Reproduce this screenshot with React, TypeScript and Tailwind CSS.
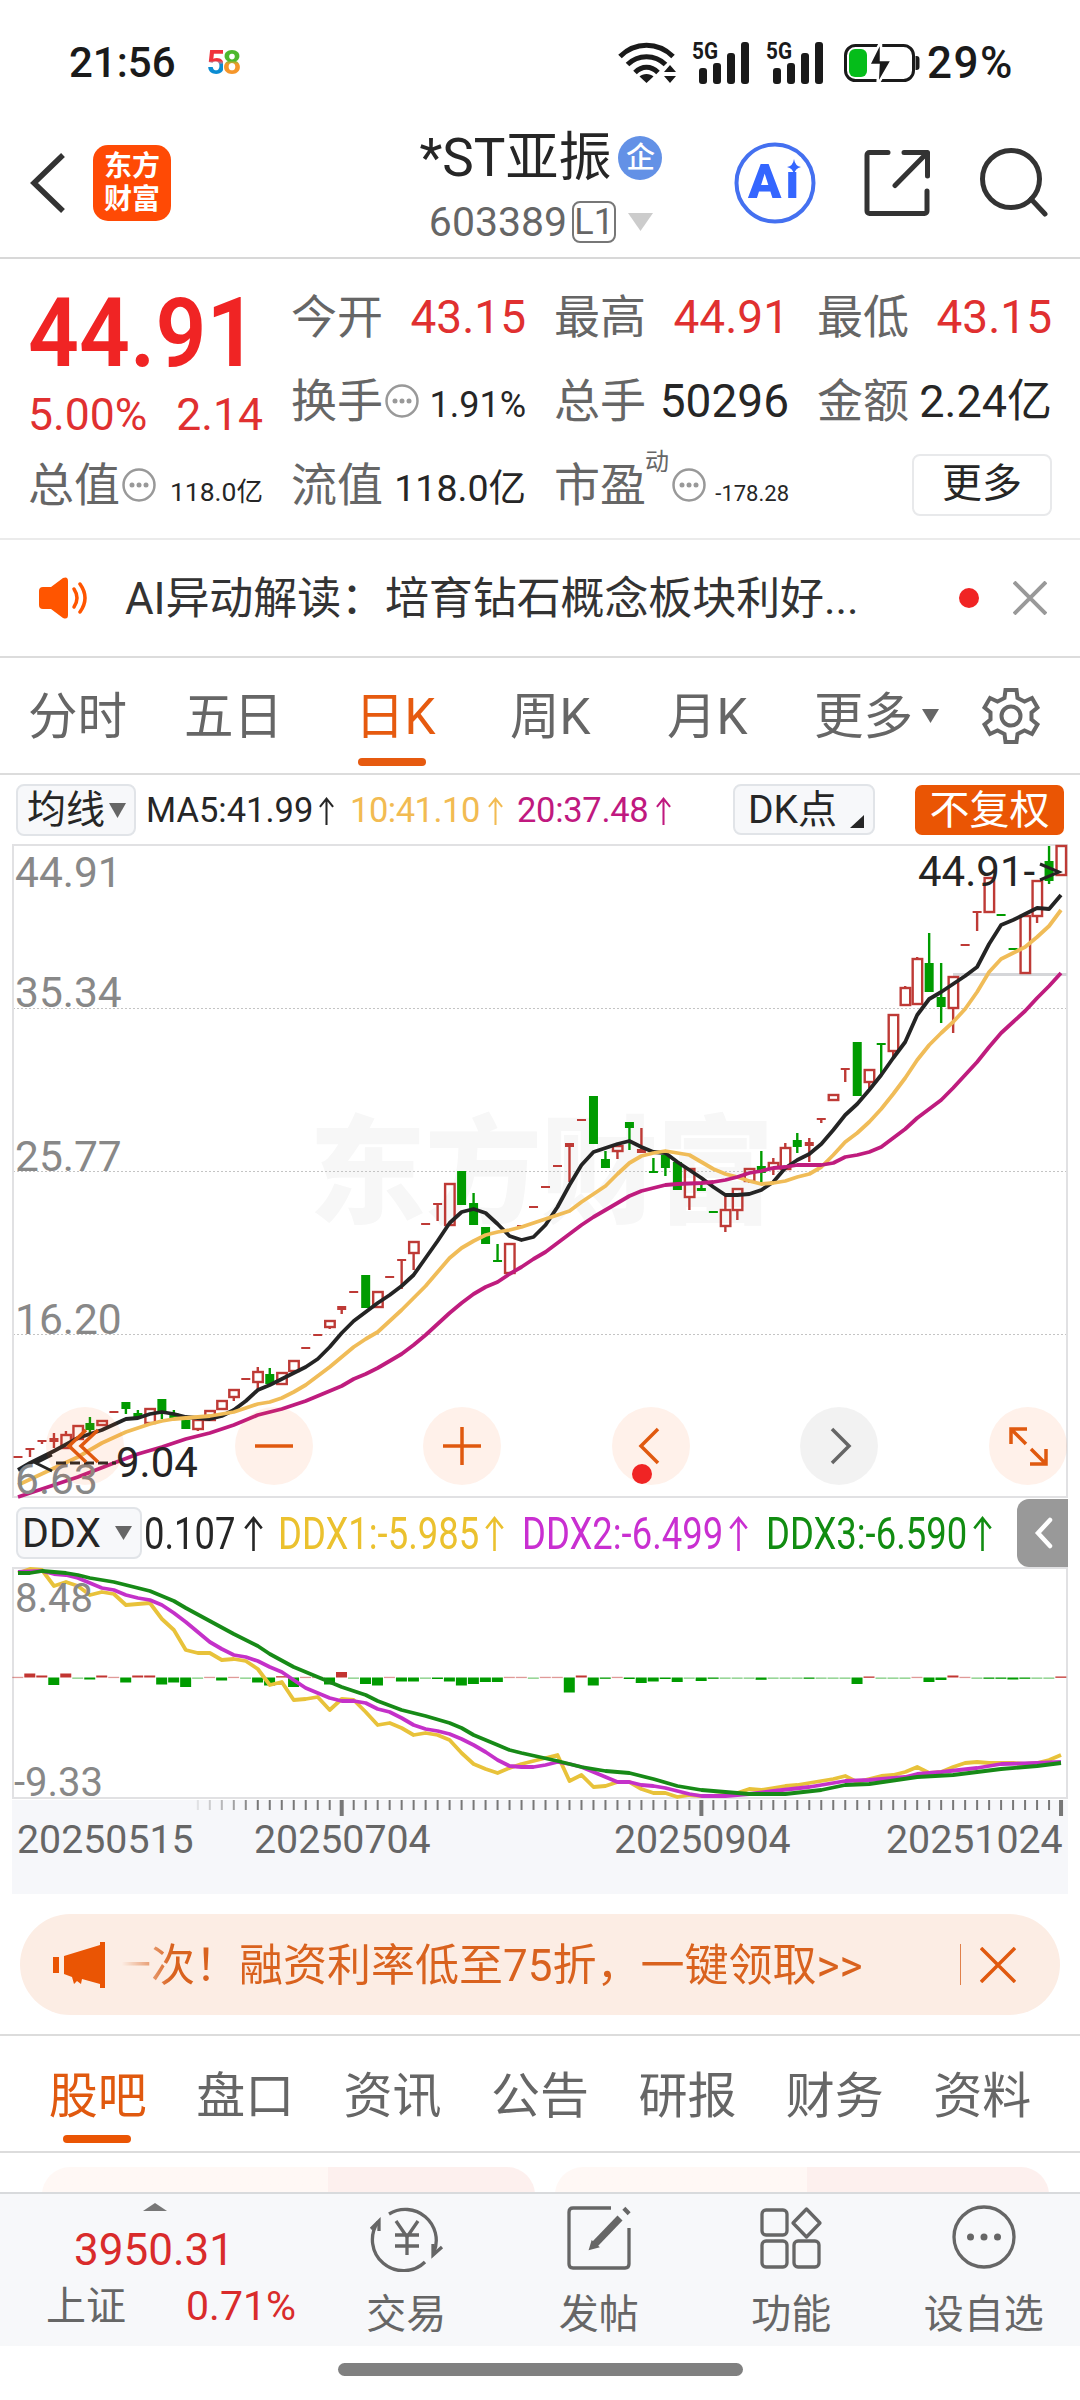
import type { ReactNode } from "react";

type TPoint = [number, number];

// [종류, 몸통 위, 몸통 아래, 고가, 저가]
// h: 빈 양봉, r: 채운 양봉, g: 음봉
type TCandle = ["h" | "r" | "g", number, number, number?, number?];

const SLOT = 11.989;
const cx = (index: number) => 18 + SLOT * index;

const candles: TCandle[] = [
  ["r", 1456, 1458],
  ["r", 1448, 1450, 1448, 1457],
  ["r", 1440, 1442, 1440, 1444],
  ["r", 1438, 1442, 1433, 1448],
  ["h", 1435, 1448, 1431],
  ["h", 1426, 1439],
  ["g", 1423, 1430, 1417, 1433],
  ["h", 1421, 1425],
  ["r", 1411, 1413],
  ["g", 1402, 1409, 1402, 1414],
  ["g", 1413, 1417, 1410],
  ["h", 1409, 1423],
  ["g", 1399, 1412, 1399, 1419],
  ["g", 1413, 1418, 1410],
  ["g", 1420, 1429],
  ["h", 1420, 1429, 1420, 1431],
  ["h", 1411, 1420],
  ["h", 1401, 1409],
  ["h", 1390, 1397, 1390, 1401],
  ["r", 1378, 1380],
  ["h", 1372, 1382, 1367, 1390],
  ["g", 1374, 1384, 1368],
  ["h", 1373, 1384],
  ["h", 1361, 1371],
  ["r", 1347, 1349],
  ["r", 1334, 1336],
  ["h", 1321, 1327, 1321, 1329],
  ["r", 1306, 1310, 1306, 1314],
  ["r", 1291, 1293],
  ["g", 1275, 1308],
  ["h", 1292, 1307],
  ["r", 1276, 1278],
  ["r", 1259, 1261, 1259, 1289],
  ["h", 1242, 1253, 1242, 1270],
  ["r", 1223, 1225],
  ["r", 1203, 1205, 1203, 1221],
  ["h", 1184, 1225],
  ["g", 1171, 1205],
  ["g", 1203, 1225, 1193],
  ["g", 1227, 1244],
  ["g", 1260, 1262, 1244],
  ["h", 1244, 1273],
  ["r", 1225, 1227],
  ["r", 1206, 1208],
  ["r", 1186, 1188],
  ["r", 1165, 1167],
  ["r", 1143, 1147, 1143, 1182],
  ["r", 1119, 1121],
  ["g", 1096, 1144],
  ["g", 1159, 1168, 1151],
  ["h", 1146, 1151, 1146, 1159],
  ["g", 1122, 1128, 1122, 1150],
  ["r", 1149, 1153, 1128],
  ["g", 1171, 1173, 1158],
  ["g", 1155, 1168, 1155, 1176],
  ["g", 1162, 1190],
  ["h", 1169, 1197, 1169, 1210],
  ["g", 1188, 1191, 1183],
  ["g", 1211, 1213],
  ["h", 1210, 1226, 1195, 1232],
  ["h", 1189, 1210, 1189, 1220],
  ["h", 1169, 1181, 1169, 1183],
  ["g", 1166, 1173, 1151, 1183],
  ["h", 1163, 1168, 1158, 1175],
  ["h", 1148, 1169, 1143],
  ["g", 1140, 1147, 1133, 1153],
  ["r", 1142, 1146, 1138, 1162],
  ["r", 1118, 1120, 1118, 1123],
  ["h", 1095, 1100],
  ["r", 1068, 1070, 1068, 1082],
  ["g", 1042, 1096],
  ["h", 1070, 1082, 1070, 1088],
  ["g", 1043, 1045, 1043, 1074],
  ["h", 1015, 1051, 1015, 1057],
  ["h", 988, 1005, 986],
  ["h", 959, 1004, 957],
  ["g", 963, 992, 933],
  ["g", 997, 1007, 963, 1023],
  ["h", 977, 1008, 977, 1033],
  ["r", 944, 946],
  ["r", 911, 913, 911, 931],
  ["h", 878, 912],
  ["g", 914, 916],
  ["g", 948, 950],
  ["h", 916, 973],
  ["h", 881, 916, 881, 923],
  ["g", 861, 881, 846, 884],
  ["h", 846, 875],
];

const ma5: TPoint[] = [
  [0, 1470], [1, 1463], [3, 1451], [5, 1438], [7, 1430], [9, 1419], [10, 1418],
  [11, 1414], [12, 1412], [13, 1414], [14, 1417], [15, 1418], [16, 1419],
  [17, 1416], [18, 1410], [19, 1401], [20, 1390], [21, 1385], [22, 1379],
  [23, 1373], [24, 1367], [25, 1359], [26, 1347], [27, 1333], [28, 1321],
  [29, 1312], [30, 1303], [31, 1295], [32, 1286], [33, 1275], [34, 1258],
  [35, 1241], [36, 1223], [37, 1212], [38, 1209], [39, 1213], [40, 1224],
  [41, 1236], [42, 1240], [43, 1237], [44, 1225], [45, 1207], [46, 1185],
  [47, 1165], [48, 1152], [49, 1148], [50, 1144], [51, 1141], [52, 1147],
  [53, 1152], [54, 1153], [55, 1162], [56, 1170], [57, 1178], [58, 1187],
  [59, 1195], [60, 1195], [61, 1194], [62, 1190], [63, 1182], [64, 1168],
  [65, 1160], [66, 1154], [67, 1144], [68, 1130], [69, 1115], [70, 1104],
  [71, 1090], [72, 1075], [73, 1058], [74, 1042], [75, 1015], [76, 999],
  [77, 992], [78, 984], [79, 976], [80, 967], [81, 944], [82, 925], [83, 920],
  [84, 914], [85, 908], [86, 909], [87, 895],
];

const ma10: TPoint[] = [
  [0, 1485], [5, 1457], [7, 1443], [9, 1432], [10, 1428], [11, 1424],
  [12, 1421], [13, 1419], [14, 1418], [15, 1417], [16, 1416], [17, 1414],
  [18, 1412], [19, 1408], [20, 1404], [21, 1402], [22, 1398], [23, 1392],
  [24, 1385], [25, 1376], [26, 1367], [27, 1357], [28, 1347], [29, 1339],
  [30, 1332], [31, 1321], [32, 1310], [33, 1298], [34, 1286], [35, 1272],
  [36, 1258], [37, 1248], [38, 1241], [39, 1235], [40, 1232], [41, 1230],
  [42, 1227], [43, 1223], [44, 1219], [45, 1215], [46, 1211], [47, 1202],
  [48, 1194], [49, 1186], [50, 1174], [51, 1163], [52, 1156], [53, 1153],
  [54, 1151], [55, 1153], [56, 1155], [57, 1162], [58, 1169], [59, 1174],
  [60, 1177], [61, 1181], [62, 1184], [63, 1183], [64, 1181], [65, 1177],
  [66, 1174], [67, 1167], [68, 1155], [69, 1142], [70, 1133], [71, 1122],
  [72, 1109], [73, 1094], [74, 1078], [75, 1060], [76, 1045], [77, 1033],
  [78, 1022], [79, 1009], [80, 992], [81, 972], [82, 959], [83, 953],
  [84, 947], [85, 937], [86, 926], [87, 910],
];

const ma20: TPoint[] = [
  [0, 1497], [5, 1477], [8, 1463], [10, 1454], [12, 1447], [14, 1439],
  [16, 1433], [18, 1425], [20, 1415], [22, 1409], [23, 1405], [24, 1401],
  [25, 1396], [26, 1391], [27, 1386], [28, 1379], [29, 1374], [30, 1368],
  [31, 1361], [32, 1354], [33, 1345], [34, 1335], [35, 1324], [36, 1313],
  [37, 1303], [38, 1294], [39, 1287], [40, 1282], [41, 1274], [42, 1267],
  [43, 1259], [44, 1252], [45, 1243], [46, 1234], [47, 1225], [48, 1217],
  [49, 1210], [50, 1203], [51, 1196], [52, 1191], [53, 1188], [54, 1185],
  [55, 1184], [57, 1183], [58, 1182], [59, 1180], [60, 1177], [61, 1173],
  [62, 1171], [63, 1168], [64, 1167], [65, 1165], [67, 1165], [68, 1163],
  [69, 1157], [70, 1155], [71, 1152], [72, 1147], [73, 1138], [74, 1129],
  [75, 1118], [76, 1109], [77, 1100], [78, 1088], [79, 1075], [80, 1062],
  [81, 1047], [82, 1033], [83, 1022], [84, 1011], [85, 998], [86, 986],
  [87, 973],
];

const ddx1: TPoint[] = [
  [0, 1573], [1, 1569], [2, 1570], [3, 1586], [4, 1582], [5, 1586], [6, 1595],
  [7, 1592], [8, 1594], [9, 1605], [10, 1604], [11, 1603], [12, 1619],
  [13, 1630], [14, 1650], [15, 1653], [16, 1653], [17, 1660], [18, 1659],
  [19, 1661], [20, 1669], [21, 1685], [22, 1682], [23, 1700], [24, 1699],
  [25, 1697], [26, 1710], [27, 1699], [28, 1700], [29, 1712], [30, 1725],
  [31, 1723], [32, 1728], [33, 1735], [34, 1733], [35, 1735], [36, 1740],
  [37, 1753], [38, 1764], [39, 1769], [40, 1773], [41, 1768], [42, 1764],
  [43, 1761], [44, 1758], [45, 1755], [46, 1781], [47, 1775], [48, 1787],
  [49, 1786], [50, 1782], [51, 1782], [52, 1789], [53, 1793], [54, 1793],
  [55, 1797], [56, 1795], [57, 1796], [58, 1796], [59, 1795], [60, 1793],
  [61, 1789], [62, 1790], [63, 1788], [64, 1786], [65, 1785], [66, 1783],
  [67, 1781], [68, 1779], [69, 1776], [70, 1782], [71, 1779], [72, 1776],
  [73, 1775], [74, 1772], [75, 1767], [76, 1773], [77, 1772], [78, 1767],
  [79, 1763], [80, 1762], [81, 1763], [83, 1763], [84, 1764], [85, 1763],
  [86, 1760], [87, 1755],
];

const ddx2: TPoint[] = [
  [0, 1572], [2, 1571], [3, 1574], [4, 1575], [5, 1578], [6, 1583], [7, 1588],
  [8, 1590], [9, 1595], [10, 1598], [11, 1600], [12, 1605], [13, 1613],
  [14, 1622], [15, 1632], [16, 1642], [17, 1649], [18, 1655], [19, 1657],
  [20, 1661], [21, 1667], [22, 1672], [23, 1680], [24, 1688], [25, 1693],
  [26, 1698], [27, 1701], [28, 1701], [29, 1703], [30, 1709], [31, 1712],
  [32, 1718], [33, 1725], [34, 1729], [35, 1731], [36, 1734], [37, 1739],
  [38, 1745], [39, 1752], [40, 1760], [41, 1766], [42, 1767], [43, 1767],
  [44, 1765], [45, 1762], [46, 1764], [47, 1767], [48, 1772], [49, 1777],
  [50, 1782], [51, 1782], [52, 1785], [53, 1786], [54, 1788], [55, 1791],
  [56, 1794], [57, 1796], [59, 1796], [61, 1794], [63, 1791], [66, 1787],
  [69, 1781], [71, 1780], [74, 1777], [75, 1774], [77, 1772], [80, 1768],
  [82, 1764], [85, 1763], [87, 1762],
];

const ddx3: TPoint[] = [
  [0, 1573], [1, 1573], [2, 1571], [4, 1573], [5, 1575], [6, 1578], [8, 1582],
  [9, 1585], [11, 1591], [13, 1601], [14, 1608], [16, 1621], [18, 1634],
  [20, 1646], [21, 1654], [23, 1667], [25, 1677], [27, 1687], [29, 1695],
  [30, 1701], [32, 1710], [34, 1716], [36, 1723], [37, 1728], [38, 1735],
  [40, 1745], [41, 1750], [42, 1753], [43.5, 1757], [45, 1761], [47, 1767],
  [49, 1771], [51, 1773], [53, 1779], [55, 1786], [57, 1790], [59, 1792],
  [61, 1794], [64, 1794], [67, 1790], [69, 1785], [71, 1784], [75, 1777],
  [78, 1775], [80, 1772], [82, 1769], [85, 1766], [87, 1763],
];

const ddxBars = [
  0.7, 4, 2, -7.5, 4, -0.7, -2, 2, 0.7, -5, 2, 2, -7, -5, -9.5, -0.7, 0.7, -3,
  0.7, -0.7, -5, -8, 1.3, -9.5, 0.7, 0.7, -7, 5.5, -0.7, -6.5, -8, 0.7, -4, -4,
  -0.7, -1.5, -4, -8, -6.5, -4.5, -4.5, 0.7, 0.7, -0.7, 0.7, 0.7, -15, 2, -8,
  -1.3, 0.7, -1.5, -5.5, -4, -1.5, -4.5, -0.7, -3.5, -1.3, -0.7, -0.7, -0.7,
  -2.3, -0.7, -0.7, -0.7, -1, -0.7, -0.7, -0.7, -6.5, 1, -0.7, -0.7, -0.7, 0.7,
  -4.5, -2.5, 2, 0.7, -0.7, -1.3, -1.3, -2, -1, -0.7, -0.7, 1,
];

const toPoints = (points: TPoint[]) =>
  points.map(([i, y]) => `${cx(i).toFixed(1)},${y}`).join(" ");

function Line({ points, color }: { points: TPoint[]; color: string }) {
  return (
    <polyline
      points={toPoints(points)}
      fill="none"
      stroke={color}
      strokeWidth="3.800"
      strokeLinejoin="round"
    />
  );
}

function Candle({ index, data }: { index: number; data: TCandle }) {
  const [kind, top, bottom, high = top, low = bottom] = data;
  const x = cx(index);
  const color = kind === "g" ? "#009b00" : "#be3a36";

  return (
    <g stroke={color} strokeWidth="2.400">
      {high < top && <line x1={x} x2={x} y1={high} y2={top} />}
      {low > bottom && <line x1={x} x2={x} y1={bottom} y2={low} />}
      {kind === "h" ? (
        <rect
          x={x - 4.5}
          y={top}
          width={9.5}
          height={bottom - top}
          fill="none"
        />
      ) : (
        <rect
          x={x - 4.5}
          y={top}
          width={9}
          height={bottom - top}
          fill={color}
          stroke="none"
        />
      )}
    </g>
  );
}

function StatusBar() {
  return (
    <div className="flex h-[125px] items-center pl-[69px] pr-[66px] text-[#1a1a1a]">
      <span className="text-[42px] font-medium leading-none">21:56</span>
      <span className="ml-[31px] flex text-[33px] font-bold leading-none tracking-[-3px]">
        <span className="bg-linear-to-b from-[#f0323c] from-45% to-[#0a8cd2] to-55% bg-clip-text text-transparent">
          5
        </span>
        <span className="bg-linear-to-b from-[#4db82e] from-45% to-[#f5962a] to-55% bg-clip-text pr-[3px] text-transparent">
          8
        </span>
      </span>
      <svg className="ml-auto" width="60" height="42" viewBox="0 0 60 42">
        <g fill="none" stroke="#1a1a1a" strokeWidth="5">
          <path d="M2 14.5C17-.5 40-.5 55 14.5" />
          <path d="M9.500 22.500C20 12 37 12 47.500 22.500" />
          <path d="M17 30.500C24 23.500 33 23.500 40 30.500" />
        </g>
        <path d="M28.500 41l-7-6.500c3-3.500 11-3.500 14 0z" fill="#1a1a1a" />
        <path d="M46 30l6-7 6 7zM46 34l6 7 6-7z" fill="#1a1a1a" />
      </svg>
      <Signal />
      <Signal />
      <svg className="ml-[18px]" width="77" height="42" viewBox="0 0 77 42">
        <rect
          x="1.500"
          y="3.500"
          width="68"
          height="35"
          rx="10"
          fill="none"
          stroke="#1a1a1a"
          strokeWidth="3"
        />
        <path d="M71.500 14h1a3 3 0 0 1 3 3v8a3 3 0 0 1-3 3h-1z" fill="#1a1a1a" />
        <rect x="5" y="7" width="18" height="28" rx="6" fill="#05bd1a" />
        <path
          d="M37-1L25 23h9.500l-1 20L48 18H37z"
          fill="#1a1a1a"
          stroke="#fff"
          strokeWidth="2.500"
        />
      </svg>
      <span className="ml-[6px] text-[44px] font-medium leading-none tracking-[1.500px]">
        29%
      </span>
    </div>
  );
}

function Signal() {
  return (
    <svg
      className="ml-[14px] overflow-visible"
      width="60"
      height="42"
      viewBox="0 0 60 42"
    >
      <text
        x="0"
        y="17"
        fontSize="24"
        fontWeight="700"
        fill="#1a1a1a"
        textLength="26"
        lengthAdjust="spacingAndGlyphs"
      >
        5G
      </text>
      <g fill="#1a1a1a">
        <rect x="7" y="26" width="8" height="16" rx="3" />
        <rect x="21" y="21" width="8" height="21" rx="3" />
        <rect x="35" y="11" width="8" height="31" rx="3" />
        <rect x="49" y="0" width="8" height="42" rx="3" />
      </g>
    </svg>
  );
}

function Header() {
  return (
    <header className="flex h-[134px] border-b-2 border-[#d8d8d8] pl-[30px]">
      <svg className="mt-[28px]" width="36" height="60" viewBox="0 0 36 60">
        <path
          d="M33 2L4 30l29 28"
          fill="none"
          stroke="#333"
          strokeWidth="5.500"
        />
      </svg>
      <div className="ml-[27px] mt-[20px] flex h-[76px] w-[78px] flex-col items-center justify-center rounded-[15px] bg-[#ff4a05] text-[28px] font-bold leading-[33px] text-white">
        <span>东方</span>
        <span>财富</span>
      </div>
      <div className="ml-[205px] flex w-[330px] flex-col items-center">
        <div className="mt-[6px] flex items-center text-[53px] leading-[54px] text-[#262626]">
          *ST亚振
          <span className="ml-[7px] flex h-[44px] w-[44px] items-center justify-center rounded-full bg-[#6391e6] text-[29px] font-medium leading-none text-white">
            企
          </span>
        </div>
        <div className="mt-[12px] flex items-center text-[41px] leading-[50px] text-[#666]">
          603389
          <span className="ml-[5px] flex h-[42px] w-[44px] items-center justify-center rounded-[8px] border-2 border-[#777] text-[36px] leading-none">
            L1
          </span>
          <svg className="ml-[12px]" width="25" height="18" viewBox="0 0 25 18">
            <path d="M0 0h25L12.500 18z" fill="#ccc" />
          </svg>
        </div>
      </div>
      <svg
        className="ml-[28px] mt-[17px]"
        width="82"
        height="82"
        viewBox="0 0 82 82"
      >
        <circle
          cx="41"
          cy="41"
          r="38.500"
          fill="none"
          stroke="#4470f0"
          strokeWidth="4"
        />
        <text
          x="14"
          y="56"
          fontSize="49"
          fontWeight="900"
          fill="#3466ff"
          textLength="51"
        >
          Ai
        </text>
        <rect x="49" y="15" width="18" height="13" fill="#fff" />
        <path d="M60 17q1 7 7 8-6 1-7 8-1-7-7-8 6-1 7-8z" fill="#3466ff" />
      </svg>
      <svg
        className="ml-[48px] mt-[24px]"
        width="66"
        height="68"
        viewBox="0 0 66 68"
      >
        <g fill="none" stroke="#333" strokeWidth="5" strokeLinecap="round">
          <path
            d="M24 3.500H5.500a2.500 2.500 0 0 0-2.500 2.500v56a2.500 2.500 0 0 0 2.500 2.500h55a2.500 2.500 0 0 0 2.500-2.500V42"
            strokeLinejoin="round"
          />
          <path d="M40 3.500h23.500V27M63 4L31 36.500" strokeLinejoin="round" />
        </g>
      </svg>
      <svg
        className="ml-[49px] mt-[22px]"
        width="70"
        height="70"
        viewBox="0 0 70 70"
      >
        <g fill="none" stroke="#333" strokeWidth="5">
          <circle cx="32" cy="32" r="28.500" />
          <path d="M52 52l14 15" strokeLinecap="round" />
        </g>
      </svg>
    </header>
  );
}

function Dots() {
  return (
    <svg width="34" height="34" viewBox="0 0 34 34">
      <circle
        cx="17"
        cy="17"
        r="15.500"
        fill="none"
        stroke="#999"
        strokeWidth="2.500"
      />
      <g fill="#999">
        <circle cx="10" cy="17" r="2.500" />
        <circle cx="17" cy="17" r="2.500" />
        <circle cx="24" cy="17" r="2.500" />
      </g>
    </svg>
  );
}

function Stat({
  label,
  children,
  hint,
  sup,
}: {
  label: string;
  children: ReactNode;
  hint?: boolean;
  sup?: string;
}) {
  return (
    <div className="flex h-[84px] items-center whitespace-nowrap text-[46px] leading-none text-[#666]">
      {label}
      {sup && (
        <span className="-mt-[46px] -ml-px mr-px text-[24px]">{sup}</span>
      )}
      {hint && (
        <span className="ml-[2px]">
          <Dots />
        </span>
      )}
      <span className="ml-auto">{children}</span>
    </div>
  );
}

function Quote() {
  return (
    <section className="h-[281px] border-b-2 border-[#ebebeb] pl-[28px] pt-[16px]">
      <div className="grid grid-cols-[repeat(4,235px)] gap-x-[28px]">
        <div className="row-span-2 pt-[16px] text-[#f02424]">
          <p className="w-max origin-left scale-x-93 text-[96px] font-semibold leading-[84px]">
            44.91
          </p>
          <p className="mt-[18px] flex justify-between text-[44.500px] leading-none text-[#e03030]">
            <span>5.00%</span>
            <span>2.14</span>
          </p>
        </div>
        <Stat label="今开">
          <span className="text-[#e03030]">43.15</span>
        </Stat>
        <Stat label="最高">
          <span className="text-[#e03030]">44.91</span>
        </Stat>
        <Stat label="最低">
          <span className="text-[#e03030]">43.15</span>
        </Stat>
        <Stat label="换手" hint>
          <span className="text-[36px] text-[#262626]">1.91%</span>
        </Stat>
        <Stat label="总手">
          <span className="text-[#262626]">50296</span>
        </Stat>
        <Stat label="金额">
          <span className="text-[45px] text-[#262626]">2.24亿</span>
        </Stat>
        <Stat label="总值" hint>
          <span className="text-[26.500px] text-[#262626]">118.0亿</span>
        </Stat>
        <Stat label="流值">
          <span className="text-[37.500px] text-[#262626]">118.0亿</span>
        </Stat>
        <Stat label="市盈" sup="动" hint>
          <span className="text-[22px] text-[#262626]">-178.28</span>
        </Stat>
        <div className="flex h-[84px] items-center justify-end">
          <button className="h-[62px] w-[140px] rounded-[8px] border-2 border-[#e8e9eb] pb-[2px] text-[40px] leading-none text-[#262626]">
            更多
          </button>
        </div>
      </div>
    </section>
  );
}

function News() {
  return (
    <section className="flex h-[118px] items-center border-b-2 border-[#dcdcdc] pl-[38px]">
      <svg width="50" height="42" viewBox="0 0 50 42">
        <path
          d="M5 10h8L25 1q5-2 5 3v34q0 5-5 3L13 32H5q-4 0-4-4V14q0-4 4-4z"
          fill="#ff5500"
        />
        <g
          fill="none"
          stroke="#ff5500"
          strokeWidth="3.500"
          strokeLinecap="round"
        >
          <path d="M36 12q6 9 0 18" />
          <path d="M42 7q10 14 0 28" />
        </g>
      </svg>
      <p className="ml-[37px] w-[800px] whitespace-nowrap pt-px text-[44px] leading-none tracking-[-0.100px] text-[#333]">
        AI异动解读：培育钻石概念板块利好...
      </p>
      <span className="ml-[34px] h-[20px] w-[20px] rounded-full bg-[#f02424]" />
      <svg className="ml-[34px]" width="34" height="34" viewBox="0 0 34 34">
        <path d="M1 1l32 32M33 1L1 33" stroke="#999" strokeWidth="4" />
      </svg>
    </section>
  );
}

function PeriodTabs() {
  return (
    <nav className="flex h-[117px] items-center border-b-2 border-[#dcdcdc] pl-[28px] text-[49.500px] leading-none text-[#666]">
      <span className="w-[156px] pt-[5px]">分时</span>
      <span className="w-[171px] pt-[5px]">五日</span>
      <span className="relative w-[155px] pt-[5px] text-[#e65a0f]">
        日K
        <span className="absolute -bottom-[23px] left-[3px] h-[8px] w-[68px] rounded-full bg-[#e65a0f]" />
      </span>
      <span className="w-[157px] pt-[5px]">周K</span>
      <span className="w-[147px] pt-[5px]">月K</span>
      <span className="pt-[5px]">更多</span>
      <svg className="ml-[9px]" width="17" height="14" viewBox="0 0 17 14">
        <path d="M0 0h17L8.500 14z" fill="#666" />
      </svg>
      <svg className="ml-[42px]" width="60" height="60" viewBox="0 0 60 60">
        <g fill="none" stroke="#666" strokeWidth="4">
          <path d="M24.500 4h11l1 8 7 3.500 7.500-3.500 5.500 9.500-6 5v7l6 5-5.500 9.500-7.500-3.500-7 3.500-1 8h-11l-1-8-7-3.500-7.500 3.500-5.500-9.500 6-5v-7l-6-5 5.500-9.500 7.500 3.500 7-3.500z" />
          <circle cx="30" cy="30" r="9.500" />
        </g>
      </svg>
    </nav>
  );
}

function Up({ className }: { className: string }) {
  return (
    <svg
      className={className}
      viewBox="0 0 18 34"
      fill="none"
      stroke="currentColor"
      strokeWidth="2.500"
    >
      <path d="M9 34V2M1 12l8-10 8 10" />
    </svg>
  );
}

function MaBar() {
  return (
    <div className="flex h-[69px] items-center pl-[16px] text-[34.500px] leading-none">
      <div className="flex h-[52px] w-[120px] items-center rounded-[8px] border-2 border-[#e1e4e8] bg-[#f7f8fa] pl-[9px] pt-px text-[39px] text-[#262626]">
        均线
        <svg className="ml-[4px]" width="17" height="15" viewBox="0 0 17 15">
          <path d="M0 0h17L8.500 15z" fill="#666" />
        </svg>
      </div>
      <span className="ml-[10px] flex w-[204px] items-center pt-[2px] text-[#262626]">
        <span className="w-[171px]">MA5:41.99</span>
        <Up className="h-[28px] w-[19px]" />
      </span>
      <span className="flex w-[167px] items-center pt-[2px] text-[#f2bb52]">
        <span className="w-[136px] tracking-[-0.500px]">10:41.10</span>
        <Up className="h-[28px] w-[19px]" />
      </span>
      <span className="flex w-[216px] items-center pt-[2px] text-[#c0197f]">
        <span className="w-[137px] tracking-[-0.300px]">20:37.48</span>
        <Up className="h-[28px] w-[19px]" />
      </span>
      <div className="flex h-[51px] w-[142px] items-center rounded-[8px] border-2 border-[#e1e4e8] bg-[#f7f8fa] pl-[13px] pt-px text-[39px] text-[#262626]">
        DK点
        <svg
          className="ml-[13px] mt-[22px]"
          width="14"
          height="13"
          viewBox="0 0 14 13"
        >
          <path d="M14 0v13H0z" fill="#262626" />
        </svg>
      </div>
      <div className="ml-[40px] flex h-[50px] w-[149px] items-center justify-center rounded-[7px] bg-[#ea5504] pt-[2px] text-[40px] text-white">
        不复权
      </div>
    </div>
  );
}

function RoundButton({
  children,
  gray,
}: {
  children: ReactNode;
  gray?: boolean;
}) {
  return (
    <span
      className={`relative h-[78px] w-[78px] rounded-full ${
        gray ? "bg-black/5" : "bg-[#fa6414]/9"
      }`}
    >
      <svg
        width="78"
        height="78"
        viewBox="0 0 78 78"
        fill="none"
        stroke={gray ? "#666" : "#e0590f"}
        strokeWidth="3.500"
      >
        {children}
      </svg>
    </span>
  );
}

function PriceChart() {
  const labels = [
    ["44.91", 887],
    ["35.34", 1007],
    ["25.77", 1171],
    ["16.20", 1334],
    ["6.63", 1494],
  ] as const;

  return (
    <div className="relative h-[655px]">
      <svg
        className="block overflow-visible"
        width="1080"
        height="655"
        viewBox="0 844 1080 655"
      >
        <text
          x="309"
          y="1214"
          fontSize="117"
          fontWeight="900"
          fill="#f7f7f7"
          textLength="465"
        >
          东方财富
        </text>
        <g stroke="#c4c4c4" strokeWidth="1" strokeDasharray="2 2">
          <line x1="13" x2="1066" y1="1008.500" y2="1008.500" />
          <line x1="13" x2="1066" y1="1171.500" y2="1171.500" />
          <line x1="13" x2="1066" y1="1334.500" y2="1334.500" />
        </g>
        <rect
          x="13"
          y="845"
          width="1054"
          height="652"
          fill="none"
          stroke="#e1e1e3"
          strokeWidth="2"
        />
        <line
          x1="953"
          x2="1067"
          y1="974.500"
          y2="974.500"
          stroke="#d5d6d9"
          strokeWidth="3"
        />
        {candles.map((data, i) => (
          <Candle key={i} index={i} data={data} />
        ))}
        <Line points={ma5} color="#242424" />
        <Line points={ma10} color="#f0bc58" />
        <Line points={ma20} color="#bf1c7e" />
        <g fontSize="42.500" fill="#888">
          {labels.map(([label, y]) => (
            <text key={label} x="15" y={y}>
              {label}
            </text>
          ))}
        </g>
        {/* 최고가 / 최저가 표시 */}
        <g fontSize="42" fill="#242424">
          <text x="918" y="886">
            44.91-
          </text>
          <text x="116" y="1477">
            9.04
          </text>
        </g>
        <g fill="none" stroke="#242424" strokeWidth="3">
          <path d="M1040 864l19 8-19 8" />
          <path d="M52 1455l-16 8 16 8" />
          <path d="M56 1463h60" strokeDasharray="10 4" />
        </g>
      </svg>
      <div className="absolute inset-x-0 top-[563px] flex justify-between pl-[46px] pr-[13px]">
        <RoundButton>
          <path d="M40 23L23 39l17 16M52 23L35 39l17 16" />
        </RoundButton>
        <RoundButton>
          <path d="M20 39h38" />
        </RoundButton>
        <RoundButton>
          <path d="M20 39h38M39 20v38" />
        </RoundButton>
        <RoundButton>
          <path d="M46 22L29 39l17 17" />
          <circle cx="30" cy="67" r="10" fill="#f02424" stroke="none" />
        </RoundButton>
        <RoundButton gray>
          <path d="M32 22l17 17-17 17" />
        </RoundButton>
        <RoundButton>
          <path d="M22 37V22h16M22 22l15 15M57 42v15H41M57 57L42 42" />
        </RoundButton>
      </div>
    </div>
  );
}

function DdxItem({ text, className }: { text: string; className: string }) {
  return (
    <span className={`flex items-center ${className}`}>
      <span className="w-[207px]">
        <span className="block w-max origin-left scale-x-81">{text}</span>
      </span>
      <Up className="h-[35px] w-[19px]" />
    </span>
  );
}

function DdxBar() {
  return (
    <div className="flex h-[68px] items-center pl-[16px] text-[45px] leading-none">
      <div className="flex h-[52px] w-[126px] items-center rounded-[8px] border-2 border-[#e1e4e8] bg-[#f7f8fa] pl-[4px] text-[41px] text-[#262626]">
        DDX
        <svg className="ml-auto mr-[8px]" width="17" height="14" viewBox="0 0 17 14">
          <path d="M0 0h17L8.500 14z" fill="#666" />
        </svg>
      </div>
      <span className="ml-[2px] flex w-[134px] items-center text-[#262626]">
        <span className="w-[100px]">
          <span className="block w-max origin-left scale-x-81">0.107</span>
        </span>
        <Up className="h-[35px] w-[19px]" />
      </span>
      <DdxItem text="DDX1:-5.985" className="w-[244px] text-[#ebc12e]" />
      <DdxItem text="DDX2:-6.499" className="w-[244px] text-[#c92fd1]" />
      <DdxItem text="DDX3:-6.590" className="w-[251px] text-[#118c11]" />
      <div className="flex h-[68px] w-[51px] items-center rounded-l-[12px] bg-[#999] pl-[17px]">
        <svg width="20" height="32" viewBox="0 0 20 32">
          <path
            d="M16 3L4 16l12 13"
            fill="none"
            stroke="#fff"
            strokeWidth="4.500"
            strokeLinecap="round"
          />
        </svg>
      </div>
    </div>
  );
}

function DdxChart() {
  return (
    <svg
      className="block"
      width="1080"
      height="233"
      viewBox="0 1567 1080 233"
    >
      <rect
        x="13"
        y="1568"
        width="1054"
        height="230"
        fill="none"
        stroke="#e1e1e3"
        strokeWidth="2"
      />
      {ddxBars.map((value, i) => (
        <rect
          key={i}
          x={12.3 + SLOT * i}
          y={value > 0 ? 1677.500 - value : 1677.500}
          width={11}
          height={Math.max(Math.abs(value), 1.3)}
          fill={value > 0 ? "#c23531" : "#009b00"}
          opacity={Math.abs(value) < 1 ? 0.5 : 1}
        />
      ))}
      <Line points={ddx1} color="#e8c23a" />
      <Line points={ddx2} color="#c431c9" />
      <Line points={ddx3} color="#178a17" />
      <g fontSize="40" fill="#888">
        <text x="15" y="1611.500">
          8.48
        </text>
        <text x="14" y="1796">
          -9.33
        </text>
      </g>
    </svg>
  );
}

function DateAxis() {
  const ticks = Array.from({ length: 73 }, (_, i) => i + 15);
  const majors = [27, 57, 87];

  return (
    <div className="mx-[12px] h-[94px] bg-[#f6f7fa]">
      <svg className="block" width="1056" height="16" viewBox="12 0 1056 16">
        {ticks.map((i) => {
          const major = majors.includes(i);
          return (
            <rect
              key={i}
              x={cx(i) - (major ? 2 : 1)}
              y="0"
              width={major ? 4 : 2}
              height={major ? 16 : 10}
              fill="#777"
              opacity={i < 20 ? (i - 14) / 6 : 1}
            />
          );
        })}
      </svg>
      <div className="mt-[4px] flex pl-[5px] text-[39.300px] leading-[40px] text-[#666]">
        <span className="w-[237px]">20250515</span>
        <span className="w-[360px]">20250704</span>
        <span className="w-[272px]">20250904</span>
        <span>20251024</span>
      </div>
    </div>
  );
}

function Banner() {
  return (
    <div className="mx-[20px] mt-[20px] flex h-[101px] items-center rounded-full bg-[#fcede4] pl-[33px] text-[#d9621e]">
      <svg width="52" height="46" viewBox="0 0 52 46">
        <path
          d="M0 15h6v16H0zM11 14L47 3V0h5v46h-5v-4l-18-5-1 5-4-3-3 3-2-7-8-3z"
          fill="#ea5504"
        />
      </svg>
      <div className="ml-[17px] w-[745px] overflow-hidden pt-[2px] [mask-image:linear-gradient(to_right,transparent,black_50px)]">
        <p className="-ml-[15px] whitespace-nowrap text-[44px] leading-[56px]">
          一次！融资利率低至75折，一键领取&gt;&gt;
        </p>
      </div>
      <span className="ml-[93px] h-[41px] w-px bg-[#e0804a]" />
      <svg className="ml-[19px]" width="36" height="36" viewBox="0 0 36 36">
        <path d="M1 1l34 34M35 1L1 35" stroke="#e0590f" strokeWidth="3.500" />
      </svg>
    </div>
  );
}

function SectionTabs() {
  const tabs = ["股吧", "盘口", "资讯", "公告", "研报", "财务", "资料"];

  return (
    <nav className="mt-[19px] grid h-[119px] grid-cols-7 items-center border-y-2 border-[#dcdcdc] px-[24px] text-center text-[49px] leading-none text-[#666]">
      {tabs.map((tab, i) =>
        i === 0 ? (
          <span key={tab} className="relative pt-[6px] text-[#e0590f]">
            {tab}
            <span className="absolute -bottom-[22px] left-[39px] h-[8px] w-[68px] rounded-full bg-[#ea5504]" />
          </span>
        ) : (
          <span key={tab} className="pt-[6px]">
            {tab}
          </span>
        ),
      )}
    </nav>
  );
}

function Action({ label, children }: { label: string; children: ReactNode }) {
  return (
    <div className="flex w-[192.500px] flex-col items-center pt-[8px]">
      <svg
        width="76"
        height="70"
        viewBox="0 0 76 70"
        fill="none"
        stroke="#666"
        strokeWidth="3.300"
      >
        {children}
      </svg>
      <span className="mt-[23px] text-[40px] leading-none">{label}</span>
    </div>
  );
}

function BottomBar() {
  return (
    <footer className="flex h-[154px] border-t-2 border-[#d8dadc] bg-[#f7f8fa] text-[#666]">
      <div className="w-[310px] pt-[9px]">
        <svg className="ml-[143px]" width="24" height="8" viewBox="0 0 24 8">
          <path d="M12 0l12 8H0z" fill="#777" />
        </svg>
        <p className="ml-[74px] mt-[17px] text-[44px] leading-none text-[#d92b2b]">
          3950.31
        </p>
        <p className="ml-[46px] mt-[14px] flex w-[250px] items-center justify-between text-[40px] leading-none">
          上证
          <span className="text-[41px] text-[#d92b2b]">0.71%</span>
        </p>
      </div>
      <Action label="交易">
        <path d="M21 12A31 31 0 0 1 66 50M57 60A31 31 0 0 1 10 20" />
        <path d="M74 45l-9 8V42M3 27l8-8v10" />
        <path d="M28 19l11 16 11-16M39 35v18M27 33h24M27 44h24" />
      </Action>
      <Action label="发帖">
        <path d="M50 6H12q-4 0-4 4v52q0 4 4 4h52q4 0 4-4V26" />
        <path d="M59 16L34 42" strokeWidth="7" />
        <path d="M64 10.500l3-3" strokeWidth="7.500" />
        <path d="M30 46l1.500-5 4 3.500z" fill="#666" />
      </Action>
      <Action label="功能">
        <rect x="9" y="8" width="25" height="25" rx="4" />
        <rect x="9" y="39" width="25" height="26" rx="4" />
        <rect x="41" y="39" width="25" height="26" rx="4" />
        <path d="M53.500 7l13.500 14-13.500 14-13.500-14z" strokeLinejoin="round" />
      </Action>
      <Action label="设自选">
        <circle cx="38" cy="35" r="30" />
        <g fill="#666" stroke="none">
          <circle cx="24.500" cy="35" r="3.500" />
          <circle cx="38" cy="35" r="3.500" />
          <circle cx="51.500" cy="35" r="3.500" />
        </g>
      </Action>
    </footer>
  );
}

export default function App() {
  return (
    <div className="h-[2400px] w-[1080px] overflow-hidden bg-white font-[Roboto,'Noto_Sans_CJK_SC',sans-serif]">
      <StatusBar />
      <Header />
      <Quote />
      <News />
      <PeriodTabs />
      <MaBar />
      <PriceChart />
      <DdxBar />
      <DdxChart />
      <DateAxis />
      <Banner />
      <SectionTabs />
      <div className="flex h-[39px] gap-[20px] overflow-hidden pl-[42px] pt-[14px]">
        <div className="h-[60px] w-[493px] rounded-[28px] bg-linear-to-r from-[#fff8f5] from-58% to-[#fdf0ee] to-58%" />
        <div className="h-[60px] w-[494px] rounded-[28px] bg-linear-to-r from-[#fff8f5] from-51% to-[#fdf0ee] to-51%" />
      </div>
      <BottomBar />
      <div className="mx-auto mt-[17px] h-[13px] w-[405px] rounded-full bg-[#808080]" />
    </div>
  );
}
